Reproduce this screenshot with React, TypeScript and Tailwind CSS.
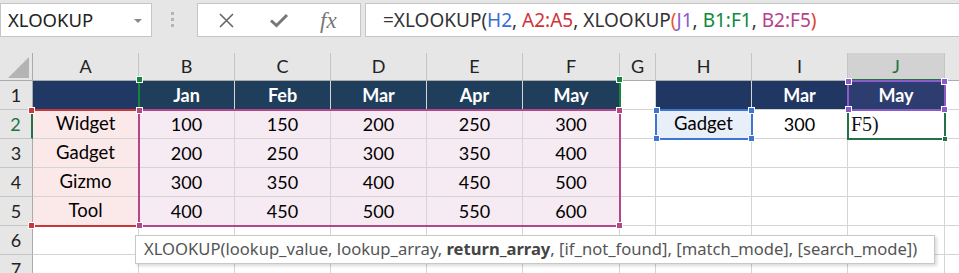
import React from "react";

const COLS = ["A", "B", "C", "D", "E", "F", "G", "H", "I", "J", "K"];
const items = ["Widget", "Gadget", "Gizmo", "Tool"];
const months = ["Jan", "Feb", "Mar", "Apr", "May"];
const values = [
  [100, 150, 200, 250, 300],
  [200, 250, 300, 350, 400],
  [300, 350, 400, 450, 500],
  [400, 450, 500, 550, 600],
];

const cell = "border-r border-b border-[#d4d4d4] flex items-center justify-center";

// little square grips on the corners of a highlighted range
const Grip = ({ pos, color }: { pos: string; color: string }) => (
  <div className={`absolute w-[7px] h-[7px] border border-white ${pos} ${color}`} />
);

const Corners = ({ color, only }: { color: string; only?: string[] }) => {
  const all = [
    ["tl", "-left-[4px] -top-[4px]"],
    ["tr", "-right-[4px] -top-[4px]"],
    ["bl", "-left-[4px] -bottom-[4px]"],
    ["br", "-right-[4px] -bottom-[4px]"],
  ];
  return (
    <>
      {all
        .filter(([k]) => !only || only.includes(k))
        .map(([k, p]) => (
          <Grip key={k} pos={p} color={color} />
        ))}
    </>
  );
};

function TopBar() {
  return (
    <div className="h-[53px] bg-[#e6e6e6] relative" style={{ fontFamily: '"Noto Sans", sans-serif' }}>
      <div className="absolute left-0 top-[3px] w-[152px] h-[34px] bg-white border border-[#c6c6c6] flex items-center pl-[7px] text-[18.5px] text-[#222]">
        XLOOKUP
        <svg className="absolute left-[133px] top-[15px]" width="8" height="5" viewBox="0 0 8 5">
          <path d="M0 0 L8 0 L4 4 Z" fill="#8a8a8a" />
        </svg>
      </div>
      <div className="absolute left-[171px] top-[12px] flex flex-col gap-[3px]">
        <div className="w-[3px] h-[3px] bg-[#b5b5b5]" />
        <div className="w-[3px] h-[3px] bg-[#b5b5b5]" />
        <div className="w-[3px] h-[3px] bg-[#b5b5b5]" />
      </div>
      <div className="absolute left-[197px] top-[3px] w-[164px] h-[34px] bg-white border border-[#c6c6c6] flex items-center">
        <svg className="ml-[20px]" width="17" height="17" viewBox="0 0 17 17">
          <path d="M2 2 L15 15 M15 2 L2 15" stroke="#666" strokeWidth="1.6" />
        </svg>
        <svg className="ml-[34px]" width="20" height="16" viewBox="0 0 20 16">
          <path d="M2 8.5 L7.5 13.5 L18 3" stroke="#777" strokeWidth="3" fill="none" />
        </svg>
        <span
          className="ml-[31px] text-[23px] italic text-[#777] leading-none"
          style={{ fontFamily: '"Liberation Serif", serif' }}
        >
          fx
        </span>
      </div>
      <div className="absolute left-[365px] top-[3px] right-[-2px] h-[34px] bg-white border border-[#c6c6c6] flex items-center pl-[17px] text-[19px] text-[#333] whitespace-pre">
        <span>=XLOOKUP(</span>
        <span className="text-[#3a6fd1]">H2</span>
        <span>, </span>
        <span className="text-[#d0323a]">A2:A5</span>
        <span>, XLOOKUP</span>
        <span className="text-[#e0592a]">(</span>
        <span className="text-[#8a5cc9]">J1</span>
        <span>, </span>
        <span className="text-[#0b8a3c]">B1:F1</span>
        <span>, </span>
        <span className="text-[#b4418a]">B2:F5</span>
        <span className="text-[#e0402a]">)</span>
      </div>
    </div>
  );
}

function Grid() {
  const rows: React.ReactNode[] = [];

  // column header row
  rows.push(
    <div key="corner" className="bg-[#e6e6e6] border-r border-b border-[#ababab] relative">
      <svg className="absolute left-[8px] top-[4px]" width="21" height="21" viewBox="0 0 21 21">
        <path d="M21 0 L21 21 L0 21 Z" fill="#b4b4b4" />
      </svg>
    </div>
  );
  COLS.forEach((c) =>
    rows.push(
      <div
        key={"h" + c}
        className={
          c === "J"
            ? "bg-[#d2d2d2] border-r border-[#c4c4c4] border-b-2 border-b-[#217346] text-[#217346] flex items-center justify-center"
            : "bg-[#e6e6e6] border-r border-b border-[#c4c4c4] border-b-[#ababab] text-[#222] flex items-center justify-center"
        }
      >
        {c === "K" ? null : c}
      </div>
    )
  );

  for (let r = 1; r <= 7; r++) {
    rows.push(
      <div
        key={"r" + r}
        className={
          r === 2
            ? "bg-[#e6e6e6] border-b border-[#c4c4c4] border-r-2 border-r-[#217346] text-[#217346] flex items-center justify-center"
            : "bg-[#e6e6e6] border-b border-[#c4c4c4] border-r border-r-[#ababab] text-[#222] flex items-center justify-center"
        }
      >
        {r}
      </div>
    );
    COLS.forEach((c, ci) => {
      let cls = cell;
      let content: React.ReactNode = null;
      if (r === 1 && ci <= 5) {
        cls += ci === 0 ? " bg-[#203864] border-[#000]" : " bg-[#1f3e5c] border-[#000] text-white font-bold";
        if (ci > 0) content = months[ci - 1];
      } else if (r >= 2 && r <= 5 && ci <= 5) {
        cls += ci === 0 ? " bg-[#fbe9e9] border-[#000] text-[18.5px]" : " bg-[#f6eaf3] border-[#000]";
        content = ci === 0 ? items[r - 2] : values[r - 2][ci - 1];
      } else if (r === 1 && c === "H") {
        cls += " bg-[#203764] border-[#000]";
      } else if (r === 1 && c === "I") {
        cls += " bg-[#203764] border-[#000] text-white font-bold";
        content = "Mar";
      } else if (r === 1 && c === "J") {
        cls += " bg-[#2d3d6f] text-white font-bold";
        content = "May";
      } else if (r === 2 && c === "H") {
        cls += " bg-[#e9eff9] text-[18.5px]";
        content = "Gadget";
      } else if (r === 2 && c === "I") {
        content = 300;
      } else if (r === 2 && c === "J") {
        cls = "border-r border-b border-[#d4d4d4] flex items-center justify-start pl-[3px]";
        content = (
          <span className="text-[20px] text-[#111]" style={{ fontFamily: '"Liberation Serif", serif' }}>
            F5)
          </span>
        );
      }
      rows.push(
        <div key={c + r} className={cls}>
          {content}
        </div>
      );
    });
  }

  return (
    <div className="relative">
      <div
        className="grid w-[1060px] grid-cols-[33px_106px_96px_96px_96px_96px_97px_36px_96px_96px_97px_96px] grid-rows-[28px_29px_29px_29px_29px_29px_29px_29px] text-[18px] text-black"
        style={{ fontFamily: "Lato, sans-serif" }}
      >
        {rows}
      </div>

      {/* A2:A5 */}
      <div className="absolute left-[32px] top-[56px] w-[108px] h-[118px] border-t-2 border-b-2 border-[#c9373b]">
        <Corners color="bg-[#c9373b]" only={["tl", "bl"]} />
      </div>
      {/* B1:F1 */}
      <div className="absolute left-[138px] top-[27px] w-[483px] h-[31px] border-l-2 border-r-2 border-[#12863a]">
        <Corners color="bg-[#12863a]" only={["tl", "tr"]} />
      </div>
      {/* B2:F5 */}
      <div className="absolute left-[138px] top-[56px] w-[483px] h-[118px] border-2 border-[#b3478a]">
        <Corners color="bg-[#b3478a]" />
      </div>
      {/* H2 */}
      <div className="absolute left-[655px] top-[56px] w-[98px] h-[31px] border-2 border-[#3c76d1]">
        <Corners color="bg-[#3c76d1]" />
      </div>
      {/* J2 active */}
      <div className="absolute left-[847px] top-[56px] w-[99px] h-[31px] border-2 border-[#217346]">
        <div className="absolute -right-[4px] -bottom-[4px] w-[6px] h-[6px] bg-[#217346] border border-white" />
      </div>
      {/* J1 */}
      <div className="absolute left-[847px] top-[27px] w-[99px] h-[31px] border-2 border-[#8a5cc9]">
        <Corners color="bg-[#8a5cc9]" />
      </div>

      {/* argument tooltip */}
      <div
        className="absolute left-[135px] top-[182px] w-[800px] h-[29px] bg-white border border-[#c8c8c8] shadow-[2px_2px_3px_rgba(0,0,0,0.15)] flex items-center pl-[8px] text-[16.6px] text-[#555] whitespace-pre"
        style={{ fontFamily: '"Noto Sans", sans-serif' }}
      >
        XLOOKUP(lookup_value, lookup_array, <b className="text-[#444]">return_array</b>, [if_not_found], [match_mode],
        [search_mode])
      </div>
    </div>
  );
}

export default function App() {
  return (
    <div className="w-[959px] h-[273px] overflow-hidden bg-white">
      <TopBar />
      <Grid />
    </div>
  );
}
